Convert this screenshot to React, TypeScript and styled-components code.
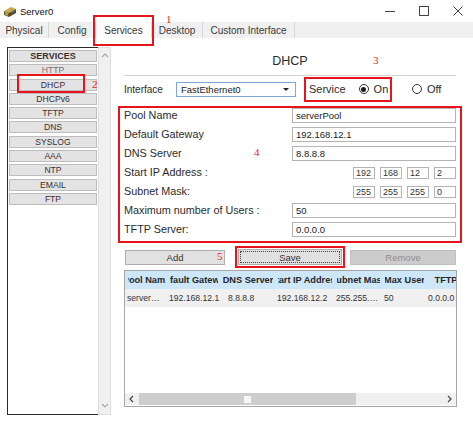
import styled, { createGlobalStyle } from "styled-components";

const GlobalStyle = createGlobalStyle`
  html, body { margin: 0; padding: 0; background: #fff; }
  body { font-family: "Liberation Sans", Arial, sans-serif; color: #1e1e1e; }
  * { box-sizing: border-box; }
`;

const Window = styled.div`
  position: relative;
  width: 473px;
  height: 422px;
  overflow: hidden;
  background: #fff;
`;

/* title bar */
const TitleBar = styled.div`
  height: 22px;
  display: flex;
  align-items: center;
  padding-left: 3px;
`;
const TitleText = styled.span`
  font-size: 9.5px;
  margin-left: 3px;
  color: #111;
`;
const WinControls = styled.div`
  margin-left: auto;
  display: flex;
  height: 22px;
  margin-right: -2px;
`;
const WinButton = styled.div`
  width: 34px;
  display: flex;
  align-items: center;
  justify-content: center;
`;

/* tabs */
const TabStrip = styled.div`
  height: 16px;
  background: #f0f0f0;
  display: flex;
`;
const Tab = styled.div<{ $w: number; $active?: boolean }>`
  width: ${(p) => p.$w}px;
  display: flex;
  align-items: center;
  justify-content: center;
  font-size: 10px;
  color: #3a3a3a;
  border-right: 1px solid #d6d6d6;
  background: ${(p) => (p.$active ? "#fbfbfb" : "transparent")};
`;

/* body */
const Body = styled.div`
  display: flex;
  padding: 9px 0 0 7px;
  gap: 7px;
`;

const Sidebar = styled.div`
  width: 104px;
  height: 368px;
  display: flex;
`;
const ServiceList = styled.div`
  flex: 1;
  border: 1px solid #2a2a2a;
  border-right: none;
  padding: 2px 1px;
  display: flex;
  flex-direction: column;
  gap: 2.3px;
`;
const ServiceButton = styled.div<{ $head?: boolean; $dim?: boolean }>`
  height: 12px;
  border: 1px solid #bdbdbd;
  background: #e3e3e3;
  display: flex;
  align-items: center;
  justify-content: center;
  font-size: ${(p) => (p.$head ? "9px" : "8.6px")};
  font-weight: ${(p) => (p.$head ? 700 : 400)};
  color: ${(p) => (p.$dim ? "#7a6f6f" : "#3b3030")};
`;
const VScroll = styled.div`
  width: 13px;
  background: #f0f0f0;
  border: 1px solid #dedede;
  display: flex;
  flex-direction: column;
  justify-content: space-between;
  align-items: center;
  padding: 4px 0;
`;

const Main = styled.div`
  width: 344px;
  display: flex;
  flex-direction: column;
`;
const PanelTitle = styled.div`
  height: 28px;
  display: flex;
  align-items: center;
  justify-content: center;
  font-size: 12.5px;
  color: #2a2a2a;
`;
const Divider = styled.div`
  height: 1px;
  background: #d2d2d2;
  margin: 0 6px;
`;
const InterfaceRow = styled.div`
  height: 26px;
  display: flex;
  align-items: center;
  padding-left: 6px;
`;
const SmallLabel = styled.span<{ $size?: number }>`
  font-size: ${(p) => p.$size ?? 10}px;
  color: #2b2b2b;
`;
const Select = styled.div`
  width: 120px;
  height: 15px;
  margin-left: 13px;
  border: 1px solid #7ea6d8;
  background: #fff;
  display: flex;
  align-items: center;
  padding: 0 6px 0 4px;
  font-size: 9.5px;
  color: #222;
  justify-content: space-between;
`;
const Arrow = styled.span`
  width: 0;
  height: 0;
  border-left: 3px solid transparent;
  border-right: 3px solid transparent;
  border-top: 3px solid #222;
`;
const ServiceBox = styled.div`
  margin-left: 8px;
  width: 88px;
  height: 25px;
  border: 2px solid #e8141c;
  display: flex;
  align-items: center;
  padding-left: 3px;
`;
const RadioGroup = styled.label<{ $ml: number }>`
  display: flex;
  align-items: center;
  gap: 5px;
  margin-left: ${(p) => p.$ml}px;
`;
const Radio = styled.span<{ $checked?: boolean }>`
  width: 10px;
  height: 10px;
  border-radius: 50%;
  border: 1px solid #333;
  background: #fff;
  display: flex;
  align-items: center;
  justify-content: center;
  &::after {
    content: "";
    width: 5px;
    height: 5px;
    border-radius: 50%;
    background: ${(p) => (p.$checked ? "#1b1b1b" : "transparent")};
  }
`;

const FieldBox = styled.div`
  margin-top: 4px;
  border: 2px solid #e8141c;
  padding: 0 4px;
  display: flex;
  flex-direction: column;
`;
const FieldRow = styled.div`
  height: 19px;
  display: flex;
  justify-content: space-between;
  align-items: flex-start;
`;
const FieldLabel = styled.span`
  font-size: 10.8px;
  line-height: 15px;
  color: #2b2b2b;
`;
const TextInput = styled.div`
  width: 164px;
  height: 15px;
  border: 1px solid #b4b4b4;
  padding-left: 3px;
  font-size: 9.5px;
  line-height: 13px;
  color: #222;
`;
const OctetGroup = styled.div`
  height: 15px;
  display: flex;
  align-items: center;
  gap: 5px;
`;
const Octet = styled.div`
  width: 22px;
  height: 12px;
  border: 1px solid #b4b4b4;
  padding-left: 2px;
  font-size: 9px;
  line-height: 10px;
  color: #333;
`;

const ButtonRow = styled.div`
  margin-top: 3px;
  height: 22px;
  display: flex;
  align-items: center;
  padding-left: 7px;
`;
const ActionButton = styled.div<{ $w: number; $disabled?: boolean; $ml?: number }>`
  width: ${(p) => p.$w}px;
  height: 15px;
  margin-left: ${(p) => p.$ml ?? 0}px;
  border: 1px solid ${(p) => (p.$disabled ? "#bfbfbf" : "#adadad")};
  background: ${(p) => (p.$disabled ? "#cccccc" : "#e1e1e1")};
  color: ${(p) => (p.$disabled ? "#8d8d8d" : "#333")};
  font-size: 9.5px;
  display: flex;
  align-items: center;
  justify-content: center;
`;
const FocusWrap = styled.div`
  margin-left: 10px;
  border: 2px solid #e8141c;
  padding: 1px;
`;
const SaveButton = styled.div`
  width: 104px;
  height: 16px;
  border: 1px solid #adadad;
  background: #e1e1e1;
  font-size: 9.5px;
  color: #333;
  display: flex;
  align-items: center;
  justify-content: center;
  outline: 1px dotted #444;
  outline-offset: -3px;
`;

const Table = styled.div`
  margin: 2px 5px 0 6px;
  height: 137px;
  border: 1px solid #a6a6a6;
  display: flex;
  flex-direction: column;
  overflow: hidden;
`;
const TableRow = styled.div<{ $head?: boolean }>`
  height: 18px;
  display: flex;
  flex-shrink: 0;
  background: ${(p) => (p.$head ? "#cde6f8" : "#f0f0f0")};
`;
const HeadCell = styled.div<{ $w: number }>`
  width: ${(p) => p.$w}px;
  flex-shrink: 0;
  display: flex;
  padding: 0 2px 0 3px;
`;
const HeadClip = styled.div`
  flex: 1;
  min-width: 0;
  display: flex;
  align-items: center;
  justify-content: center;
  overflow: hidden;
  white-space: nowrap;
  font-size: 9.2px;
  font-weight: 700;
  color: #262626;
`;
const Cell = styled.div<{ $w: number; $pl: number; $pr: number }>`
  width: ${(p) => p.$w}px;
  flex-shrink: 0;
  padding: 0 ${(p) => p.$pr}px 0 ${(p) => p.$pl}px;
  line-height: 18px;
  overflow: hidden;
  white-space: nowrap;
  text-overflow: ellipsis;
  font-size: 8.6px;
  color: #333;
`;
const Spacer = styled.div`
  flex: 1;
`;
const HScroll = styled.div`
  height: 12px;
  margin-bottom: 1px;
  background: #f0f0f0;
  display: flex;
  align-items: center;
`;
const ScrollArrow = styled.div`
  width: 13px;
  display: flex;
  align-items: center;
  justify-content: center;
`;
const Thumb = styled.div`
  margin-left: 1px;
  width: 217px;
  height: 12px;
  background: #cdcdcd;
  display: flex;
  align-items: center;
  justify-content: center;
`;
const Grip = styled.span`
  width: 7px;
  height: 7px;
  background: #f6f6f6;
`;

/* annotations drawn over the screenshot */
const Mark = styled.div<{ $x: number; $y: number; $w: number; $h: number }>`
  position: absolute;
  left: ${(p) => p.$x}px;
  top: ${(p) => p.$y}px;
  width: ${(p) => p.$w}px;
  height: ${(p) => p.$h}px;
  border: 2px solid #e8141c;
`;
const Num = styled.span<{ $x: number; $y: number }>`
  position: absolute;
  left: ${(p) => p.$x}px;
  top: ${(p) => p.$y}px;
  font-family: "Liberation Serif", serif;
  font-size: 11px;
  line-height: 11px;
  color: #ee2222;
`;

const services = ["HTTP", "DHCP", "DHCPv6", "TFTP", "DNS", "SYSLOG", "AAA", "NTP", "EMAIL", "FTP"];

const columns = [
  { w: 42, head: "Pool Name", val: "serverPool", pl: 2, pr: 4 },
  { w: 53, head: "Default Gateway", val: "192.168.12.1", pl: 2, pr: 0 },
  { w: 55, head: "DNS Server", val: "8.8.8.8", pl: 8, pr: 0 },
  { w: 59, head: "Start IP Address", val: "192.168.12.2", pl: 2, pr: 0 },
  { w: 48, head: "Subnet Mask", val: "255.255.255.0", pl: 2, pr: 2 },
  { w: 44, head: "Max User", val: "50", pl: 2, pr: 0 },
  { w: 70, head: "TFTP Server", val: "0.0.0.0", pl: 2, pr: 0 },
];

const Chevron = ({ dir }: { dir: "up" | "down" | "left" | "right" }) => {
  const d = {
    up: "M1 5 L4 2 L7 5",
    down: "M1 2 L4 5 L7 2",
    left: "M5 1 L2 4 L5 7",
    right: "M2 1 L5 4 L2 7",
  }[dir];
  return (
    <svg width="8" height="8" viewBox="0 0 8 8">
      <path d={d} fill="none" stroke={dir === "left" || dir === "right" ? "#444" : "#a8a8a8"} strokeWidth="1.2" />
    </svg>
  );
};

const ServerIcon = () => (
  <svg width="14" height="13" viewBox="0 0 14 13">
    <path d="M1 6 L8 2 L13 4 L6 8 Z" fill="#c9a64a" />
    <path d="M1 6 L6 8 L6 12 L1 10 Z" fill="#7a5a24" />
    <path d="M6 8 L13 4 L13 8 L6 12 Z" fill="#5b4520" />
    <path d="M2 7.5 L5 8.7" stroke="#9ad04a" strokeWidth="1" />
    <path d="M2 9 L5 10.2" stroke="#9ad04a" strokeWidth="1" />
    <path d="M8 8 L12 6" stroke="#3a7fc0" strokeWidth="1" />
  </svg>
);

export default function App() {
  return (
    <Window>
      <GlobalStyle />
      <TitleBar>
        <ServerIcon />
        <TitleText>Server0</TitleText>
        <WinControls>
          <WinButton>
            <svg width="10" height="10" viewBox="0 0 10 10">
              <path d="M0 5.5 H10" stroke="#444" strokeWidth="1" />
            </svg>
          </WinButton>
          <WinButton>
            <svg width="10" height="10" viewBox="0 0 10 10">
              <rect x="0.5" y="0.5" width="9" height="9" fill="none" stroke="#444" strokeWidth="1" />
            </svg>
          </WinButton>
          <WinButton>
            <svg width="10" height="10" viewBox="0 0 10 10">
              <path d="M0.5 0.5 L9.5 9.5 M9.5 0.5 L0.5 9.5" stroke="#444" strokeWidth="1" />
            </svg>
          </WinButton>
        </WinControls>
      </TitleBar>

      <TabStrip>
        <Tab $w={49}>Physical</Tab>
        <Tab $w={47}>Config</Tab>
        <Tab $w={56} $active>Services</Tab>
        <Tab $w={51}>Desktop</Tab>
        <Tab $w={92}>Custom Interface</Tab>
      </TabStrip>

      <Body>
        <Sidebar>
          <ServiceList>
            <ServiceButton $head>SERVICES</ServiceButton>
            {services.map((s) => (
              <ServiceButton key={s} $dim={s === "HTTP"}>
                {s}
              </ServiceButton>
            ))}
          </ServiceList>
          <VScroll>
            <Chevron dir="up" />
            <Chevron dir="down" />
          </VScroll>
        </Sidebar>

        <Main>
          <PanelTitle>DHCP</PanelTitle>
          <Divider />
          <InterfaceRow>
            <SmallLabel>Interface</SmallLabel>
            <Select>
              FastEthernet0
              <Arrow />
            </Select>
            <ServiceBox>
              <SmallLabel $size={11}>Service</SmallLabel>
              <RadioGroup $ml={13}>
                <Radio $checked />
                <SmallLabel $size={11}>On</SmallLabel>
              </RadioGroup>
            </ServiceBox>
            <RadioGroup $ml={20}>
              <Radio />
              <SmallLabel $size={11}>Off</SmallLabel>
            </RadioGroup>
          </InterfaceRow>

          <FieldBox>
            <FieldRow>
              <FieldLabel>Pool Name</FieldLabel>
              <TextInput>serverPool</TextInput>
            </FieldRow>
            <FieldRow>
              <FieldLabel>Default Gateway</FieldLabel>
              <TextInput>192.168.12.1</TextInput>
            </FieldRow>
            <FieldRow>
              <FieldLabel>DNS Server</FieldLabel>
              <TextInput>8.8.8.8</TextInput>
            </FieldRow>
            <FieldRow>
              <FieldLabel>Start IP Address :</FieldLabel>
              <OctetGroup>
                {["192", "168", "12", "2"].map((o, i) => (
                  <Octet key={i}>{o}</Octet>
                ))}
              </OctetGroup>
            </FieldRow>
            <FieldRow>
              <FieldLabel>Subnet Mask:</FieldLabel>
              <OctetGroup>
                {["255", "255", "255", "0"].map((o, i) => (
                  <Octet key={i}>{o}</Octet>
                ))}
              </OctetGroup>
            </FieldRow>
            <FieldRow>
              <FieldLabel>Maximum number of Users :</FieldLabel>
              <TextInput>50</TextInput>
            </FieldRow>
            <FieldRow>
              <FieldLabel>TFTP Server:</FieldLabel>
              <TextInput>0.0.0.0</TextInput>
            </FieldRow>
          </FieldBox>

          <ButtonRow>
            <ActionButton $w={100}>Add</ActionButton>
            <FocusWrap>
              <SaveButton>Save</SaveButton>
            </FocusWrap>
            <ActionButton $w={106} $ml={5} $disabled>
              Remove
            </ActionButton>
          </ButtonRow>

          <Table>
            <TableRow $head>
              {columns.map((c) => (
                <HeadCell key={c.head} $w={c.w}>
                  <HeadClip>
                    <span>{c.head}</span>
                  </HeadClip>
                </HeadCell>
              ))}
            </TableRow>
            <TableRow>
              {columns.map((c) => (
                <Cell key={c.head} $w={c.w} $pl={c.pl} $pr={c.pr}>
                  {c.val}
                </Cell>
              ))}
            </TableRow>
            <Spacer />
            <HScroll>
              <ScrollArrow>
                <Chevron dir="left" />
              </ScrollArrow>
              <Thumb>
                <Grip />
              </Thumb>
              <Spacer />
              <ScrollArrow>
                <Chevron dir="right" />
              </ScrollArrow>
            </HScroll>
          </Table>
        </Main>
      </Body>

      <Mark $x={93} $y={15} $w={61} $h={31} />
      <Mark $x={17} $y={74} $w={68} $h={19} />
      <Num $x={166} $y={14}>1</Num>
      <Num $x={92} $y={79}>2</Num>
      <Num $x={373} $y={55}>3</Num>
      <Num $x={254} $y={147}>4</Num>
      <Num $x={217} $y={251}>5</Num>
    </Window>
  );
}
